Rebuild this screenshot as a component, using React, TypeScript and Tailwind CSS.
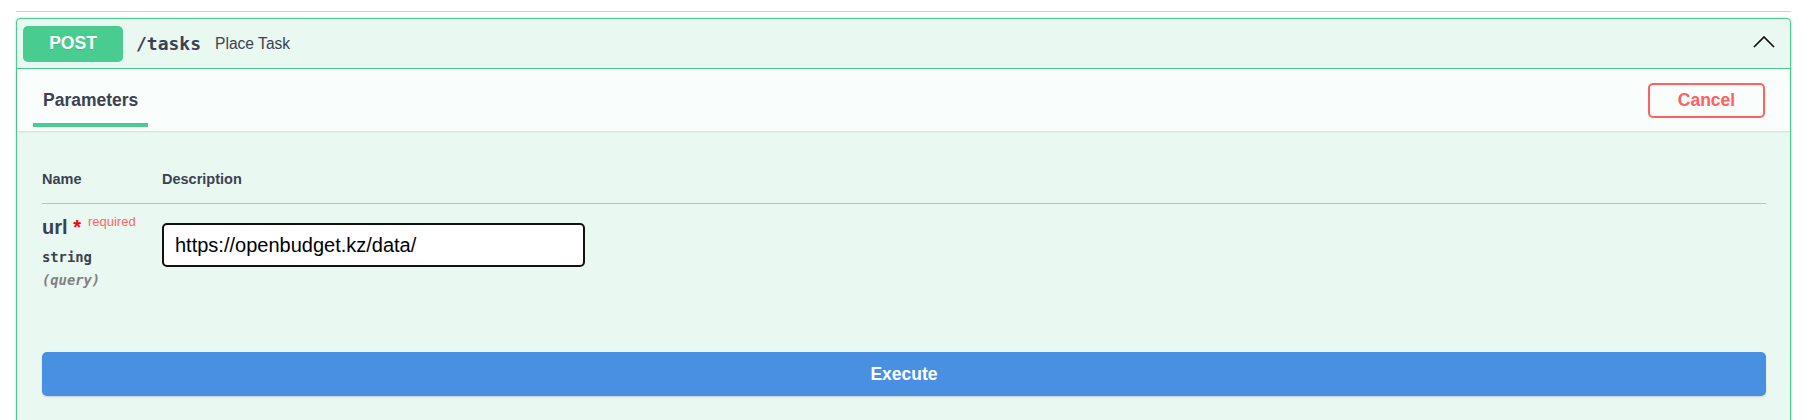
import React from 'react';

const sans = "font-['Liberation_Sans',Arial,sans-serif]";
const mono = "font-['DejaVu_Sans_Mono','Liberation_Mono',monospace]";

const ChevronUp: React.FC = () => (
  <svg width="22" height="12" viewBox="0 0 22 12" className="mb-[4px]">
    <polyline points="1,11 11,1 21,11" fill="none" stroke="#111" strokeWidth="1.7" />
  </svg>
);

const App: React.FC = () => {
  return (
    <div className={`min-h-screen bg-white ${sans}`}>
      <div className="ml-[16px] w-[1775px]">
        <div className="h-[12px] border-b border-[#d0d1d4]" />

        <div className="mt-[6px] rounded-[4px] border border-[#49cc90] bg-[#e9f8f1] shadow-[0_0_3px_rgba(0,0,0,0.19)]">
          {/* summary */}
          <div className="flex h-[50px] items-center border-b border-[#49cc90] pl-[6px] pr-[15px]">
            <div className="flex h-[36px] w-[100px] items-center justify-center rounded-[5px] bg-[#49cc90] text-[17.5px] font-bold text-white [text-shadow:0_1px_0_rgba(0,0,0,0.1)]">
              POST
            </div>
            <span className={`ml-[13px] text-[18px] font-bold text-[#3b4151] ${mono}`}>/tasks</span>
            <span className="ml-[14px] text-[15.6px] text-[#3b4151]">Place Task</span>
            <div className="flex-1" />
            <ChevronUp />
          </div>

          {/* section header */}
          <div className="flex h-[62px] items-stretch justify-between bg-[#f9fdfb] pl-[16px] pr-[25px] shadow-[0_1px_2px_rgba(0,0,0,0.1)]">
            <div className="flex flex-col pt-[21px]">
              <h4 className="px-[10px] text-[17.5px] font-bold leading-[20px] text-[#3b4151]">Parameters</h4>
              <div className="mt-[13px] h-[4px] bg-[#49cc90]" />
            </div>
            <div className="flex items-center">
              <button className="h-[35px] w-[117px] rounded-[5px] border-2 border-[#ff6060] text-[17.5px] font-bold text-[#ff6060]">
                Cancel
              </button>
            </div>
          </div>

          {/* body */}
          <div className="pl-[25px] pr-[24px] pt-[25px]">
            <div className="flex border-b border-[#b7c2bf] py-[15px] text-[14.5px] font-bold leading-[17px] text-[#3b4151]">
              <div className="w-[120px]">Name</div>
              <div>Description</div>
            </div>
            <div className="flex pt-[12px]">
              <div className="w-[120px]">
                <div className="flex items-baseline text-[20px] font-bold leading-[23px] text-[#3b4151]">
                  url&nbsp;<span className="text-[#ff0000]">*</span>
                  <span className="relative top-[-8px] ml-[7px] text-[13px] font-normal text-[#ff6666]">required</span>
                </div>
                <div className={`mt-[8px] text-[13.8px] font-bold leading-[17px] text-[#3b4151] ${mono}`}>string</div>
                <div className={`mt-[6px] text-[13.8px] font-bold italic leading-[17px] text-[#808080] ${mono}`}>(query)</div>
              </div>
              <div className="pt-[7px]">
                <input
                  className="h-[44px] w-[423px] rounded-[5px] border-2 border-[#111] bg-white px-[11px] text-[20px] text-black outline-none"
                  defaultValue="https://openbudget.kz/data/"
                />
              </div>
            </div>
            <div className="pb-[30px] pt-[63px]">
              <button className="h-[44px] w-full rounded-[5px] bg-[#4990e2] text-[17.5px] font-bold text-white shadow-[0_1px_2px_rgba(0,0,0,0.15)]">
                Execute
              </button>
            </div>
          </div>
        </div>
      </div>
    </div>
  );
};

export default App;
